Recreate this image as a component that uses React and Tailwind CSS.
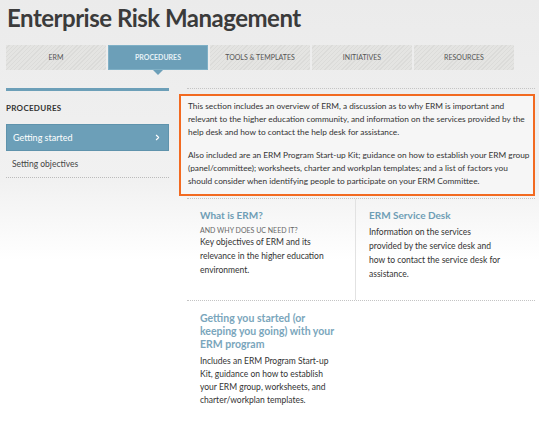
import React from "react";
import { ChevronRight } from "lucide-react";

const tabs = ["ERM", "PROCEDURES", "TOOLS & TEMPLATES", "INITIATIVES", "RESOURCES"];

const App = () => {
  return (
    <div className="w-[539px] h-[422px] overflow-hidden bg-[linear-gradient(180deg,#ebebeb_0px,#f1f1f1_180px,#ffffff_260px)] font-['Lato',sans-serif] text-[#333]">
      {/* Header */}
      <div className="h-[45px] pl-[7px] pt-[2px]">
        <h1 className="text-[24px] leading-[32px] font-bold text-[#3b3b3b] tracking-[-0.5px]">
          Enterprise Risk Management
        </h1>
      </div>

      {/* Tabs */}
      <div className="grid grid-cols-5 gap-[2px] ml-[6px] w-[508px]">
        {tabs.map((t) => {
          const active = t === "PROCEDURES";
          return (
            <div
              key={t}
              className={
                active
                  ? "relative h-[25px] flex items-center justify-center bg-[#6c9fb8] border border-[#7fb0c6] text-[#e6f1f6] text-[7px] font-bold"
                  : "relative h-[25px] flex items-center justify-center bg-[repeating-linear-gradient(135deg,#e4e4e2_0px,#e4e4e2_2px,#dbdbd9_2px,#dbdbd9_3px)] text-[#555] text-[7px]"
              }
            >
              {t}
              {active && (
                <span className="absolute left-1/2 -translate-x-1/2 top-[24px] w-0 h-0 border-l-[5px] border-r-[5px] border-t-[5px] border-l-transparent border-r-transparent border-t-[#6c9fb8]" />
              )}
            </div>
          );
        })}
      </div>

      {/* Body */}
      <div className="flex mt-[18px] ml-[6px]">
        {/* Sidebar */}
        <div className="w-[163px]">
          <div className="h-[3px] bg-[#6c9fb8]" />
          <div className="pt-[11px] pb-[10px] text-[8px] font-bold text-[#333] tracking-[0.3px]">
            PROCEDURES
          </div>
          <div className="h-[27px] flex items-center justify-between px-[6px] bg-[#6c9fb8] border border-[#5f93ac] text-white text-[9px]">
            <span>Getting started</span>
            <ChevronRight size={9} strokeWidth={3} />
          </div>
          <div className="h-[27px] flex items-center px-[6px] text-[8.5px] text-[#444] border-b border-dotted border-[#bbb]">
            Setting objectives
          </div>
        </div>

        {/* Main */}
        <div className="flex-1 ml-[10px] mr-[4px]">
          <div className="ml-[8px] border-t border-dotted border-[#c4c4c4]" />
          <div className="mt-[5px] border-2 border-[#f26a21] bg-[#f6f6f6] pl-[7px] pr-[3px] pt-[4px] pb-[6px] text-[8.3px] leading-[13px] text-[#333]">
            <p>
              This section includes an overview of ERM, a discussion as to why ERM is important and
              relevant to the higher education community, and information on the services provided by the
              help desk and how to contact the help desk for assistance.
            </p>
            <p className="mt-[10px]">
              Also included are an ERM Program Start-up Kit; guidance on how to establish your ERM group
              (panel/committee); worksheets, charter and workplan templates; and a list of factors you
              should consider when identifying people to participate on your ERM Committee.
            </p>
          </div>

          <div className="ml-[8px] mt-[2px] border-t border-dotted border-[#c4c4c4]">
            <div className="grid grid-cols-[169px_1fr] border-b border-dotted border-[#c4c4c4]">
              <div className="h-[101px] pl-[13px] pt-[9px] pr-[22px] border-r border-[#e2e2e2]">
                <h3 className="text-[10px] font-bold text-[#6e9db5] leading-[14px]">What is ERM?</h3>
                <div className="mt-[3px] text-[7px] text-[#666] leading-[10px]">AND WHY DOES UC NEED IT?</div>
                <p className="text-[8.5px] leading-[14px] text-[#333]">
                  Key objectives of ERM and its relevance in the higher education environment.
                </p>
              </div>
              <div className="h-[101px] pl-[13px] pt-[9px] pr-[16px]">
                <h3 className="text-[10px] font-bold text-[#6e9db5] leading-[14px]">ERM Service Desk</h3>
                <p className="mt-[3px] text-[8.5px] leading-[14px] text-[#333]">
                  Information on the services
                  <br />
                  provided by the service desk and
                  <br />
                  how to contact the service desk for
                  <br />
                  assistance.
                </p>
              </div>
            </div>
            <div className="pl-[13px] pt-[11px] w-[148px]">
              <h3 className="text-[10.5px] font-bold text-[#7aa6bc] leading-[13px]">
                Getting you started (or keeping you going) with your ERM program
              </h3>
              <p className="mt-[4px] text-[8.5px] leading-[13px] text-[#333]">
                Includes an ERM Program Start-up Kit, guidance on how to establish your ERM group, worksheets, and
                charter/workplan templates.
              </p>
            </div>
          </div>
        </div>
      </div>
    </div>
  );
};

export default App;
